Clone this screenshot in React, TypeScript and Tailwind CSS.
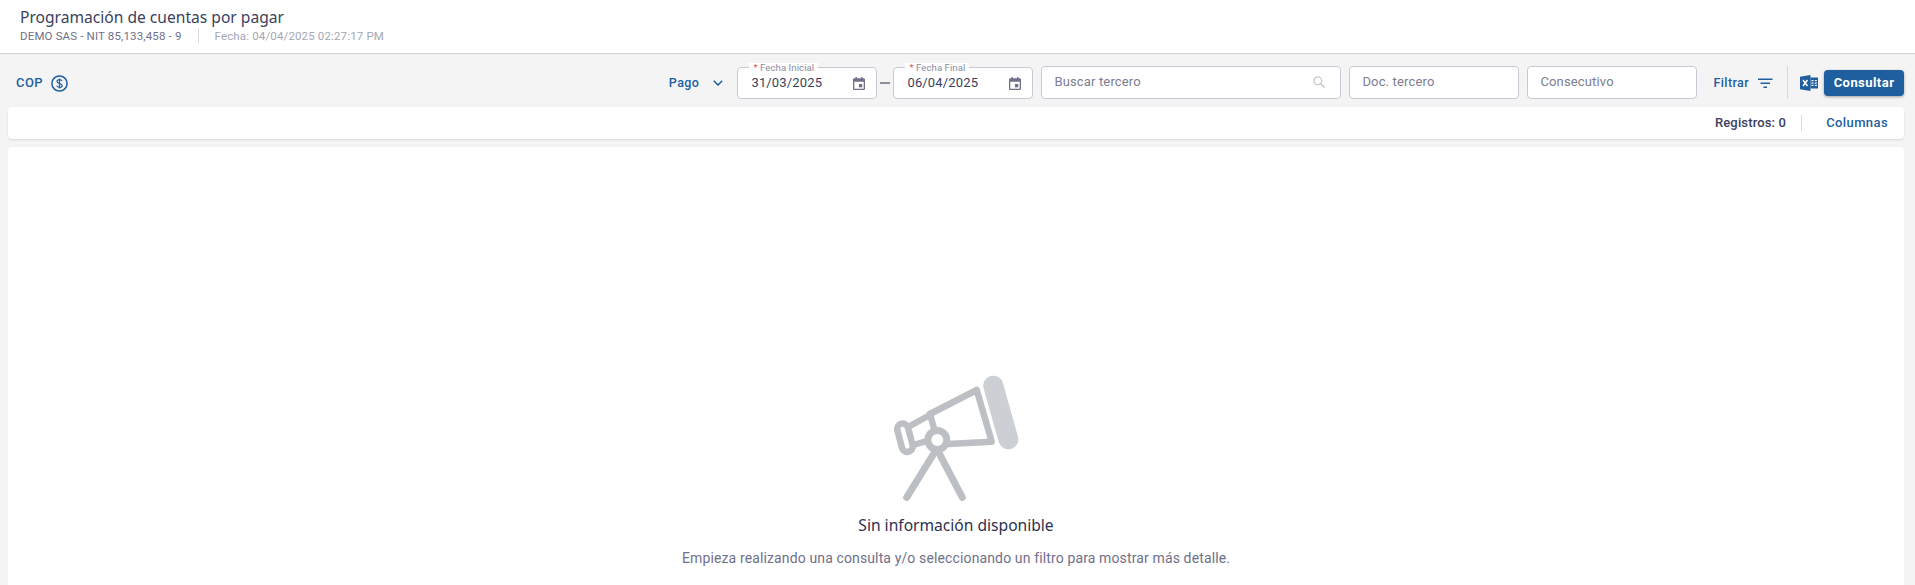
import React from "react";

const roboto = "font-['Roboto',sans-serif]";

function CalendarIcon() {
  return (
    <svg width="12" height="13" viewBox="0 0 12 13" fill="#70708a" className="shrink-0">
      <path d="M2.500 0h1.400v1.300h4.200V0h1.400v1.300h1.200c.6 0 1.300.6 1.300 1.300v9.100c0 .7-.7 1.300-1.300 1.300H1.300C.6 13 0 12.400 0 11.700V2.600c0-.7.6-1.300 1.300-1.300h1.200V0zM1.300 4.800v6.900h9.400V4.800H1.300z" />
      <rect x="6" y="7" width="3.300" height="3.300" />
    </svg>
  );
}

function DateField({ label, value, className }: { label: string; value: string; className?: string }) {
  return (
    <div className={`relative flex h-8 w-[140px] items-center justify-between rounded border border-[#c9c9d6] bg-white pl-[13px] pr-[11px] ${className ?? ""}`}>
      <span className="absolute left-[11px] top-[-5px] bg-white px-[4px] text-[9.5px] leading-[10px] tracking-[0.1px] text-[#8a8a9c]">
        <span className="text-[#e0525e]">*</span> {label}
      </span>
      <span className="text-[13px] tracking-[0.15px] text-[#3a3f5c]">{value}</span>
      <CalendarIcon />
    </div>
  );
}

function TextField({ placeholder, className, icon }: { placeholder: string; className: string; icon?: boolean }) {
  return (
    <div className={`mb-[1px] flex h-[33px] items-center justify-between rounded border border-[#c9c9d6] bg-white pb-[2px] pl-[12px] pr-[15px] ${className}`}>
      <span className="text-[13px] tracking-[0.15px] text-[#7d7d90]">{placeholder}</span>
      {icon && (
        <svg width="12" height="12" viewBox="0 0 12 12" fill="none" stroke="#c4c4cc" strokeWidth="1.2">
          <circle cx="4.800" cy="4.800" r="3.900" />
          <path d="M7.700 7.700 11.500 11.500" strokeWidth="1.500" />
        </svg>
      )}
    </div>
  );
}

export default function App() {
  return (
    <div className={`flex h-[585px] w-[1915px] flex-col overflow-hidden bg-[#f4f4f5] ${roboto}`}>
      <header className="h-[54px] shrink-0 border-b border-[#d4d4d6] bg-white pl-5 pt-[7px]">
        <h1 className="font-['Noto_Sans',sans-serif] text-[15.6px] font-normal leading-[20px] text-[#3a3f5c]">
          Programación de cuentas por pagar
        </h1>
        <div className="mt-[1px] flex items-center text-[11.5px] leading-[14px] tracking-[0.15px]">
          <span className="text-[#70708a]">DEMO SAS - NIT 85,133,458 - 9</span>
          <span className="mx-4 h-[15px] w-px bg-[#dcdce0]" />
          <span className="text-[#a6a6b4]">Fecha: 04/04/2025 02:27:17 PM</span>
        </div>
      </header>

      <div className="flex h-[53px] shrink-0 items-center pl-4 pr-[11px] pt-[5px]">
        <span className="text-[13px] font-medium tracking-[0.4px] text-[#1f5f9f]">COP</span>
        <svg width="17" height="17" viewBox="0 0 17 17" fill="none" stroke="#1f5f9f" className="ml-[8px]">
          <circle cx="8.500" cy="8.500" r="7.600" strokeWidth="1.500" />
          <path d="M11 6.200c-.3-1-1.300-1.500-2.500-1.500-1.400 0-2.500.7-2.500 1.900 0 2.700 5.200 1.200 5.200 3.900 0 1.200-1.200 1.900-2.700 1.900-1.300 0-2.400-.6-2.700-1.700M8.500 3.400v10.200" strokeWidth="1.200" />
        </svg>
        <div className="flex-1" />
        <span className="text-[12.5px] font-medium tracking-[0.45px] text-[#1f5f9f]">Pago</span>
        <svg width="10" height="6" viewBox="0 0 10 6" fill="none" stroke="#1f5f9f" strokeWidth="1.500" className="ml-[14px] mr-[14px]">
          <path d="M.8.800 5 5 9.200.800" />
        </svg>
        <DateField label="Fecha Inicial" value="31/03/2025" />
        <span className="mx-[3px] h-[2px] w-[10px] bg-[#8d8d9c]" />
        <DateField label="Fecha Final" value="06/04/2025" />
        <TextField placeholder="Buscar tercero" className="ml-2 w-[300px]" icon />
        <TextField placeholder="Doc. tercero" className="ml-2 w-[170px]" />
        <TextField placeholder="Consecutivo" className="ml-2 w-[170px]" />
        <span className="ml-4 text-[12.5px] font-medium tracking-[0.4px] text-[#1f5f9f]">Filtrar</span>
        <svg width="15" height="11" viewBox="0 0 15 11" fill="#1f5f9f" className="ml-[9px]">
          <rect x="0" y="0.500" width="14.500" height="1.500" />
          <rect x="2.500" y="4.500" width="9.500" height="1.500" />
          <rect x="5.500" y="8.500" width="3.500" height="1.500" />
        </svg>
        <span className="mb-[1px] ml-[14px] mr-[12px] h-[33px] w-px bg-[#d8d8dc]" />
        <svg width="18" height="16" viewBox="0 0 18 16" className="mr-[6px]">
          <path d="M0 1.800 10.500 0v16L0 14.200z" fill="#1f5f9f" />
          <path d="M3 5l4.500 6M7.500 5 3 11" stroke="#fff" strokeWidth="1.500" />
          <path d="M10.500 2.500H18v11h-7.500z" fill="#1f5f9f" />
          <path d="M11.500 5h2v1.300h-2zM14.800 5h2v1.300h-2zM11.500 7.400h2v1.300h-2zM14.800 7.400h2v1.300h-2zM11.500 9.800h2v1.300h-2zM14.800 9.800h2v1.300h-2z" fill="#fff" />
        </svg>
        <button className="flex h-[26px] w-[80px] items-center justify-center rounded bg-[#1f5f9f] text-[13px] font-bold tracking-[0.45px] text-white shadow-[0_1px_3px_rgba(0,0,0,0.35)]">
          Consultar
        </button>
      </div>

      <div className="mx-2 flex h-[32px] w-[1896px] shrink-0 items-center justify-end rounded bg-white pr-4 shadow-[0_1px_2px_rgba(0,0,0,0.12)]">
        <span className="text-[13px] font-medium tracking-[0.15px] text-[#3a3f5c]">Registros: 0</span>
        <span className="ml-[15px] mr-[24px] h-4 w-px bg-[#dcdce0]" />
        <span className="text-[13px] font-medium tracking-[0.4px] text-[#1f5f9f]">Columnas</span>
      </div>

      <main className="mx-2 mt-2 flex w-[1896px] flex-1 flex-col items-center rounded-t bg-white pt-[213px]">
        <svg width="200" height="145" viewBox="-4 0 200 145" fill="none" className="shrink-0">
          <path d="M133.300 25.700 148.300 79.300" stroke="#ccd0d4" strokeWidth="20" strokeLinecap="round" />
          <g stroke="#bcbfc3" strokeWidth="6.500" strokeLinecap="round" strokeLinejoin="round">
            <path d="M70 54 116.700 30 131.700 81.700 88 84" />
            <path d="M70 54 75 72" />
            <path d="M51.700 65 70 55" />
            <path d="M53 85 67 81" />
            <rect x="39.500" y="63.200" width="11" height="29" rx="5.500" transform="rotate(-15 45 77.700)" />
            <circle cx="77.300" cy="80" r="9.500" fill="#fff" strokeWidth="7" />
            <path d="M75 91.700 46.700 137.300" strokeWidth="7" />
            <path d="M78.300 91.700 102.300 137.300" strokeWidth="7" />
          </g>
        </svg>
        <div className="mt-[10px] font-['Noto_Sans',sans-serif] text-[15.6px] font-normal leading-[20px] text-[#2c3150]">
          Sin información disponible
        </div>
        <div className="mt-[13px] text-[14px] leading-[20px] tracking-[0.13px] text-[#70708a]">
          Empieza realizando una consulta y/o seleccionando un filtro para mostrar más detalle.
        </div>
      </main>
    </div>
  );
}
